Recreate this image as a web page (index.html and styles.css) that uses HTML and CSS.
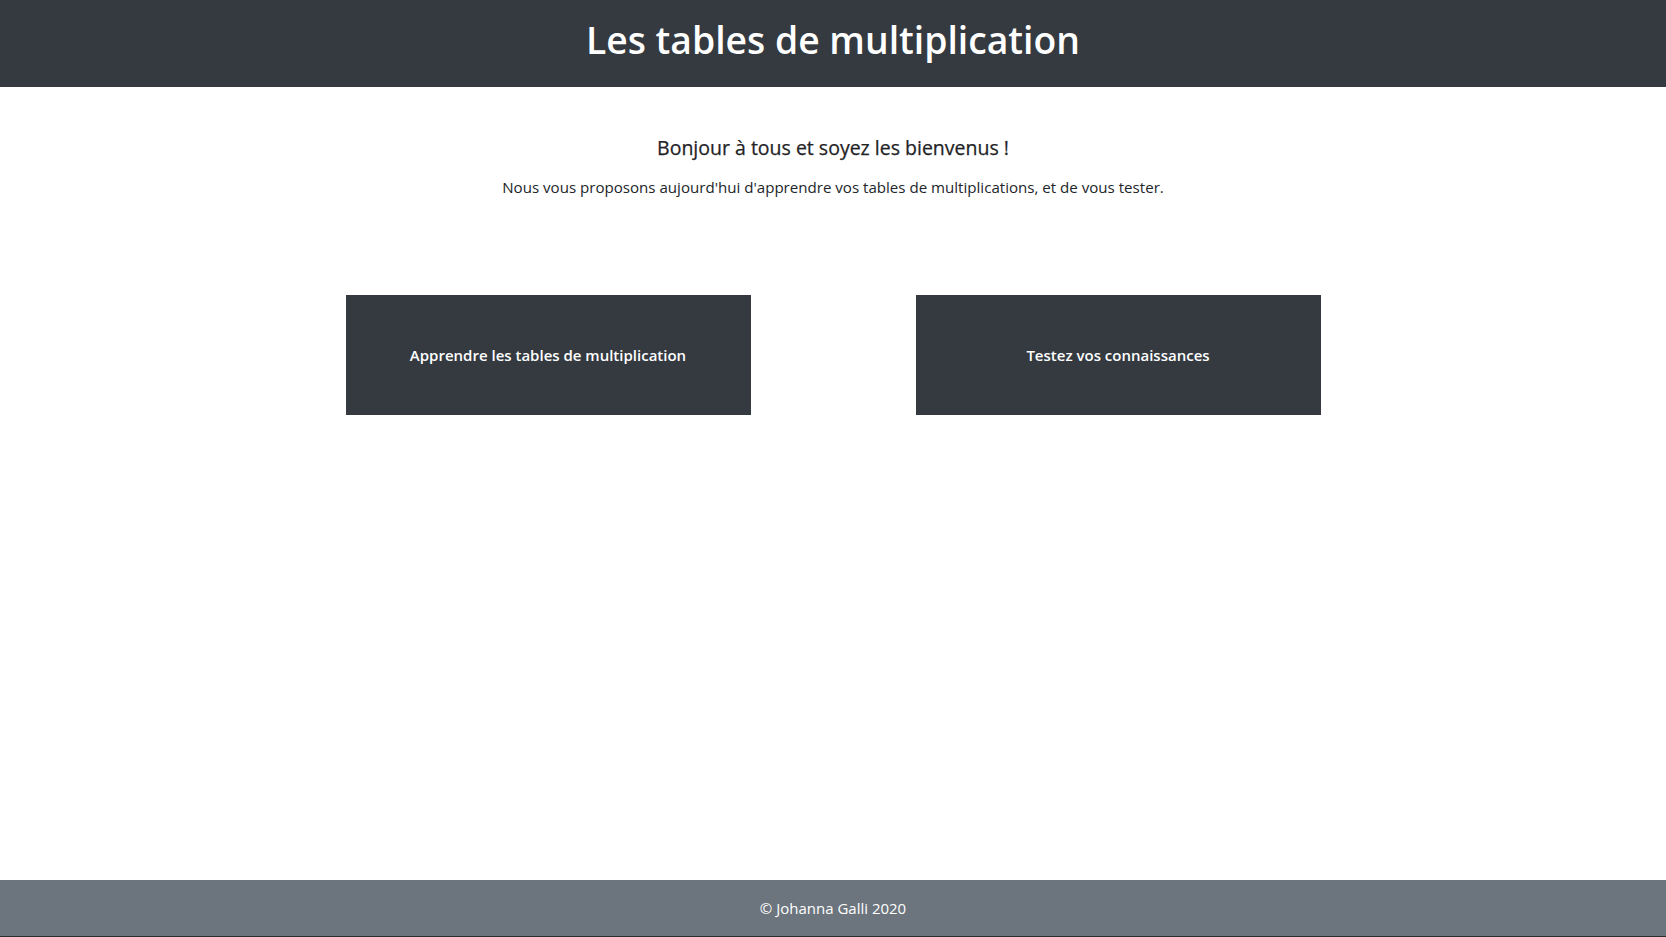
FILE: index.html
```html
<!DOCTYPE html>
<html lang="fr">
<head>
<meta charset="utf-8">
<title>Les tables de multiplication</title>
<link rel="stylesheet" href="styles.css">
</head>
<body>
<div class="page">
  <header class="top">
    <h1 class="title">Les tables de multiplication</h1>
  </header>
  <main class="main">
    <section class="intro">
      <h5 class="welcome">Bonjour à tous et soyez les bienvenus !</h5>
      <p class="lead">Nous vous proposons aujourd'hui d'apprendre vos tables de multiplications, et de vous tester.</p>
    </section>
    <section class="choices">
      <div class="col"><a class="btn" href="#">Apprendre les tables de multiplication</a></div>
      <div class="col"><a class="btn" href="#">Testez vos connaissances</a></div>
    </section>
  </main>
  <footer class="foot">© Johanna Galli 2020</footer>
  <div class="edge"></div>
</div>
</body>
</html>
```

FILE: styles.css
```css
* { box-sizing: border-box; }
html, body { margin: 0; padding: 0; }
body {
  font-family: "Open Sans", "Noto Sans", sans-serif;
  color: #212529;
  background: #fff;
}
.page {
  height: 937px;
  display: flex;
  flex-direction: column;
  overflow: hidden;
}
.top {
  height: 87px;
  background: #343a40;
  display: flex;
  align-items: center;
  justify-content: center;
}
.title {
  margin: 0;
  color: #fff;
  font-size: 37.3px;
  font-weight: 600;
  line-height: 1.2;
  padding-bottom: 6px;
}
.main {
  flex: 1;
  width: 1140px;
  margin: 0 auto;
}
.intro {
  text-align: center;
  padding-top: 49px;
}
.welcome {
  margin: 0;
  font-size: 19.5px;
  font-weight: 500;
  line-height: 1.2;
  color: #1f2326;
  -webkit-text-stroke: 0.25px #1f2326;
}
.lead {
  margin: 17px 0 0;
  font-size: 15.1px;
  line-height: 1.5;
}
.choices {
  display: grid;
  grid-template-columns: 1fr 1fr;
  margin-top: 96px;
}
.col {
  display: flex;
  justify-content: center;
}
.btn {
  width: 405px;
  height: 120px;
  background: #343a40;
  color: #fff;
  text-decoration: none;
  font-weight: 600;
  font-size: 15px;
  display: flex;
  align-items: center;
  justify-content: center;
}
.foot {
  height: 56px;
  background: #6c757d;
  color: #fff;
  font-size: 15px;
  display: flex;
  align-items: center;
  justify-content: center;
}
.edge {
  height: 1px;
  background: #2b2f33;
  flex-shrink: 0;
}
```
